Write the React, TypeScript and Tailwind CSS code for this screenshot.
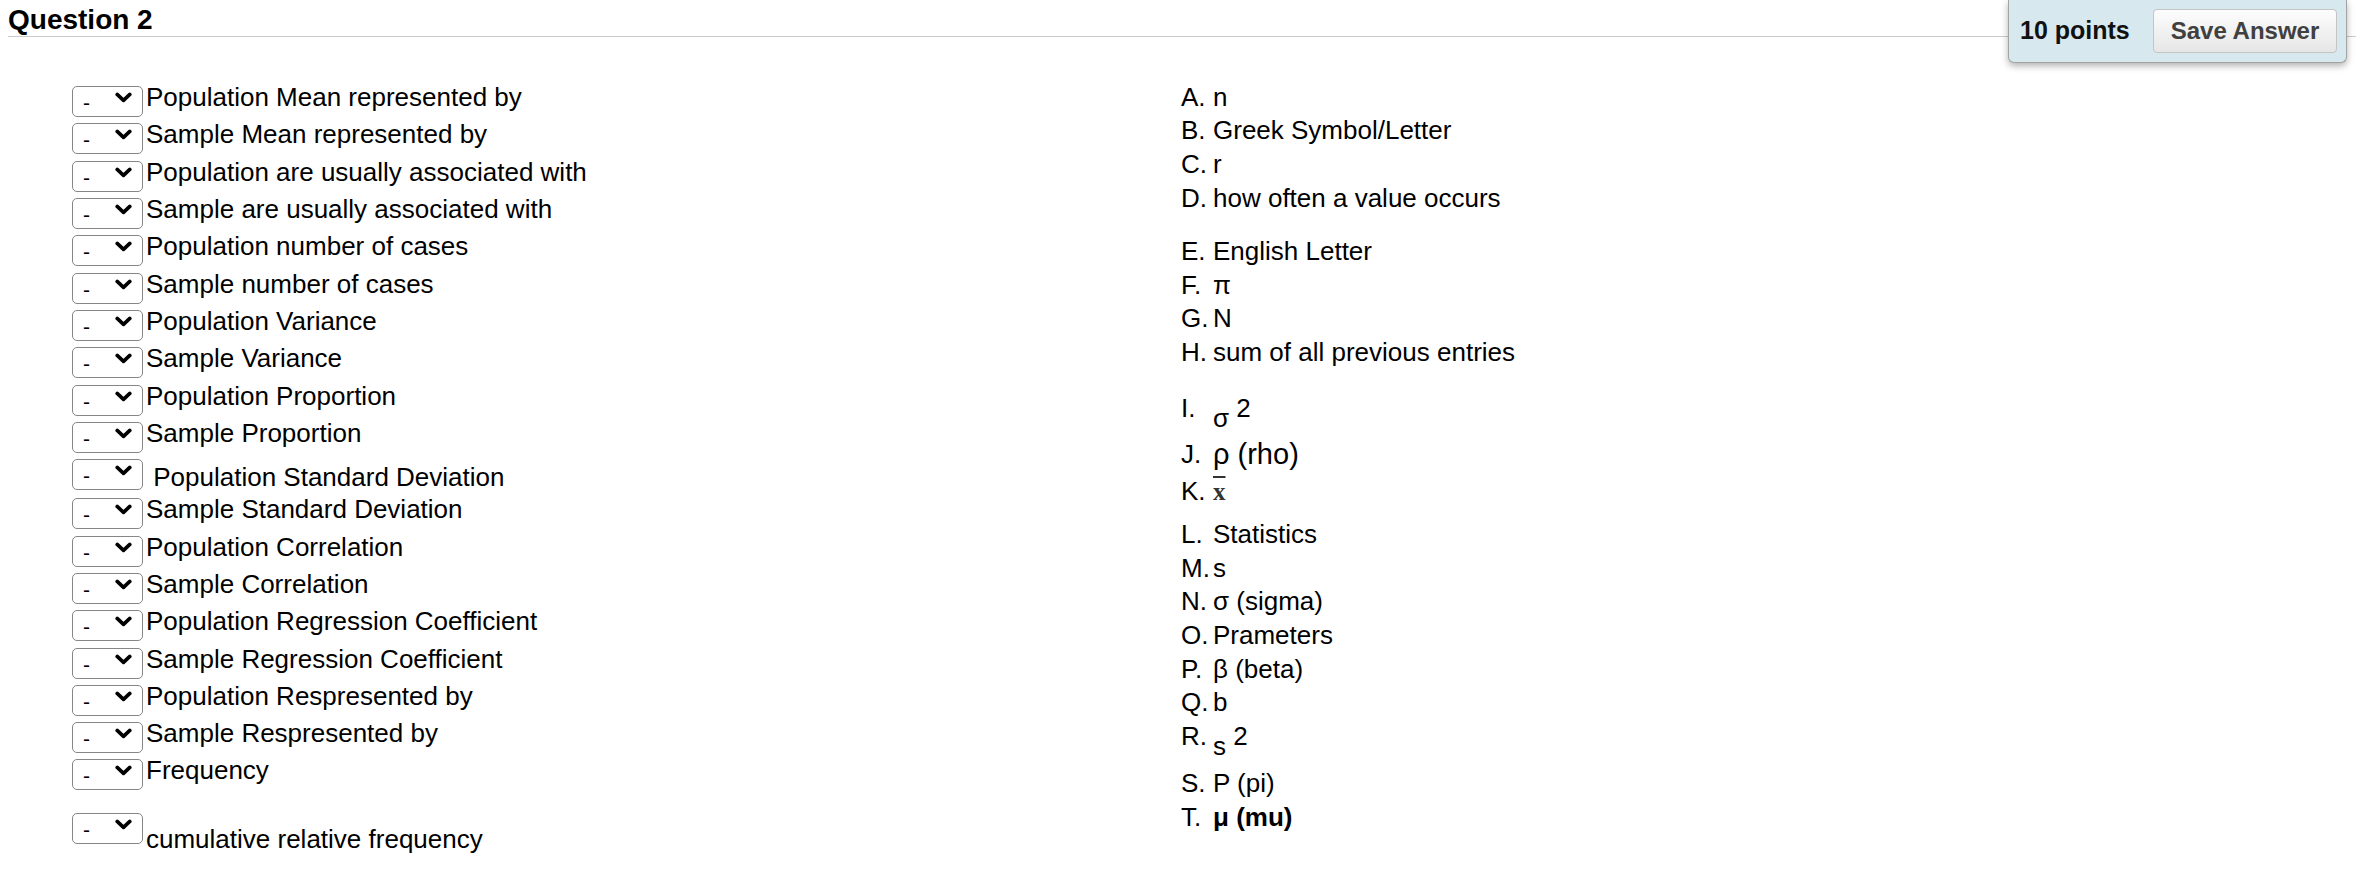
import React from 'react';

const letters = 'ABCDEFGHIJKLMNOPQRST'.split('');

const prompts = [
  'Population Mean represented by',
  'Sample Mean represented by',
  'Population are usually associated with',
  'Sample are usually associated with',
  'Population number of cases',
  'Sample number of cases',
  'Population Variance',
  'Sample Variance',
  'Population Proportion',
  'Sample Proportion',
  'Population Standard Deviation',
  'Sample Standard Deviation',
  'Population Correlation',
  'Sample Correlation',
  'Population Regression Coefficient',
  'Sample Regression Coefficient',
  'Population Respresented by',
  'Sample Respresented by',
  'Frequency',
  'cumulative relative frequency',
];

const Dropdown: React.FC = () => (
  <div className="relative w-[71px] h-[31px] shrink-0">
    <select
      defaultValue="-"
      className="appearance-none w-full h-full border-[1.5px] border-[#868686] rounded-[5px] bg-white pl-[10px] pb-[2px] text-[21px] text-black outline-none"
    >
      <option>-</option>
      {letters.map((l) => (
        <option key={l}>{l}</option>
      ))}
    </select>
    {/* chevron */}
    <svg
      className="pointer-events-none absolute left-[43px] top-[10px]"
      width="17"
      height="11"
      viewBox="0 0 17 11"
    >
      <path
        d="M2.2 2.4l6.3 6 6.3-6"
        fill="none"
        stroke="#000"
        strokeWidth="3.6"
        strokeLinecap="round"
        strokeLinejoin="round"
      />
    </svg>
  </div>
);

const PromptRow: React.FC<{ text: string }> = ({ text }) => (
  <div className="flex items-center h-[37.3px]">
    <Dropdown />
    <span className="ml-[3px] leading-[29px]">{text}</span>
  </div>
);

const Letter: React.FC<{ l: string }> = ({ l }) => (
  <span className="w-[32px] shrink-0 leading-[33.7px]">{l}.</span>
);

const AnswerRow: React.FC<{ l: string; h: string; children: React.ReactNode }> = ({ l, h, children }) => (
  <div className={`flex items-start ${h}`}>
    <Letter l={l} />
    {children}
  </div>
);

const Plain: React.FC<{ children: React.ReactNode }> = ({ children }) => (
  <span className="leading-[33.7px]">{children}</span>
);

const App: React.FC = () => {
  return (
    <div className="relative min-h-screen bg-white text-black font-['Liberation_Sans',Arial,sans-serif] text-[26px]">
      {/* Header */}
      <div className="mx-[8px] pt-[6px] pb-[2px] border-b-[1.5px] border-[#cacaca]">
        <h2 className="text-[28px] font-bold leading-[28px]">Question 2</h2>
      </div>

      {/* Points box */}
      <div className="absolute top-0 right-[17px] w-[339px] h-[63px] flex items-center justify-between pl-[11px] pr-[9px] bg-[#d7e8ee] border-x-[1.5px] border-b-[1.5px] border-[#a3a3a3] rounded-b-[6px] shadow-[0_3px_7px_rgba(0,0,0,0.3)]">
        <span className="text-[25px] font-bold text-[#111]">10 points</span>
        <button className="w-[184px] h-[44px] rounded-[4px] border-[1.5px] border-[#c4c4c4] bg-gradient-to-b from-[#fdfdfd] to-[#e6e6e6] text-[24px] font-bold text-[#404040]">
          Save Answer
        </button>
      </div>

      {/* Matching */}
      <div className="flex pt-[42px] pl-[72px]">
        {/* Prompts */}
        <div className="w-[1109px] shrink-0 flex flex-col">
          {prompts.slice(0, 10).map((p) => (
            <PromptRow key={p} text={p} />
          ))}
          <div className="flex items-start h-[39.3px]">
            <div className="mt-[3px]">
              <Dropdown />
            </div>
            <span className="ml-[3px] mt-[10.6px] leading-[29px]">{'\u00a0' + prompts[10]}</span>
          </div>
          {prompts.slice(11, 19).map((p) => (
            <PromptRow key={p} text={p} />
          ))}
          <div className="flex items-start">
            <div className="mt-[19px]">
              <Dropdown />
            </div>
            <span className="ml-[3px] mt-[35px] leading-[29px]">{prompts[19]}</span>
          </div>
        </div>

        {/* Answers */}
        <div className="flex flex-col mt-[1.6px]">
          <AnswerRow l="A" h="h-[33.7px]"><Plain>n</Plain></AnswerRow>
          <AnswerRow l="B" h="h-[33.7px]"><Plain>Greek Symbol/Letter</Plain></AnswerRow>
          <AnswerRow l="C" h="h-[33.7px]"><Plain>r</Plain></AnswerRow>
          <AnswerRow l="D" h="h-[53.3px]"><Plain>how often a value occurs</Plain></AnswerRow>
          <AnswerRow l="E" h="h-[33.7px]"><Plain>English Letter</Plain></AnswerRow>
          <AnswerRow l="F" h="h-[33.7px]"><Plain>π</Plain></AnswerRow>
          <AnswerRow l="G" h="h-[33.7px]"><Plain>N</Plain></AnswerRow>
          <AnswerRow l="H" h="h-[56px]"><Plain>sum of all previous entries</Plain></AnswerRow>
          <AnswerRow l="I" h="h-[46px]">
            <span className="leading-[33.7px]">
              <span className="relative top-[10px]">σ</span> 2
            </span>
          </AnswerRow>
          <AnswerRow l="J" h="h-[37px]">
            <span className="text-[29px] leading-[33.7px]">ρ (rho)</span>
          </AnswerRow>
          <AnswerRow l="K" h="h-[43px]">
            <span className="leading-[33.7px]">
              <span className="font-['Liberation_Serif',serif] font-bold text-[25px] text-[#333] overline decoration-2 decoration-[#333]">
                x
              </span>
            </span>
          </AnswerRow>
          <AnswerRow l="L" h="h-[33.7px]"><Plain>Statistics</Plain></AnswerRow>
          <AnswerRow l="M" h="h-[33.7px]"><Plain>s</Plain></AnswerRow>
          <AnswerRow l="N" h="h-[33.7px]"><Plain>σ (sigma)</Plain></AnswerRow>
          <AnswerRow l="O" h="h-[33.7px]"><Plain>Prameters</Plain></AnswerRow>
          <AnswerRow l="P" h="h-[33.7px]"><Plain>β (beta)</Plain></AnswerRow>
          <AnswerRow l="Q" h="h-[33.7px]"><Plain>b</Plain></AnswerRow>
          <AnswerRow l="R" h="h-[47px]">
            <span className="leading-[33.7px]">
              <span className="relative top-[10px]">s</span> 2
            </span>
          </AnswerRow>
          <AnswerRow l="S" h="h-[33.7px]"><Plain>P (pi)</Plain></AnswerRow>
          <AnswerRow l="T" h="h-[33.7px]">
            <span className="leading-[33.7px] font-bold">μ (mu)</span>
          </AnswerRow>
        </div>
      </div>
    </div>
  );
};

export default App;
